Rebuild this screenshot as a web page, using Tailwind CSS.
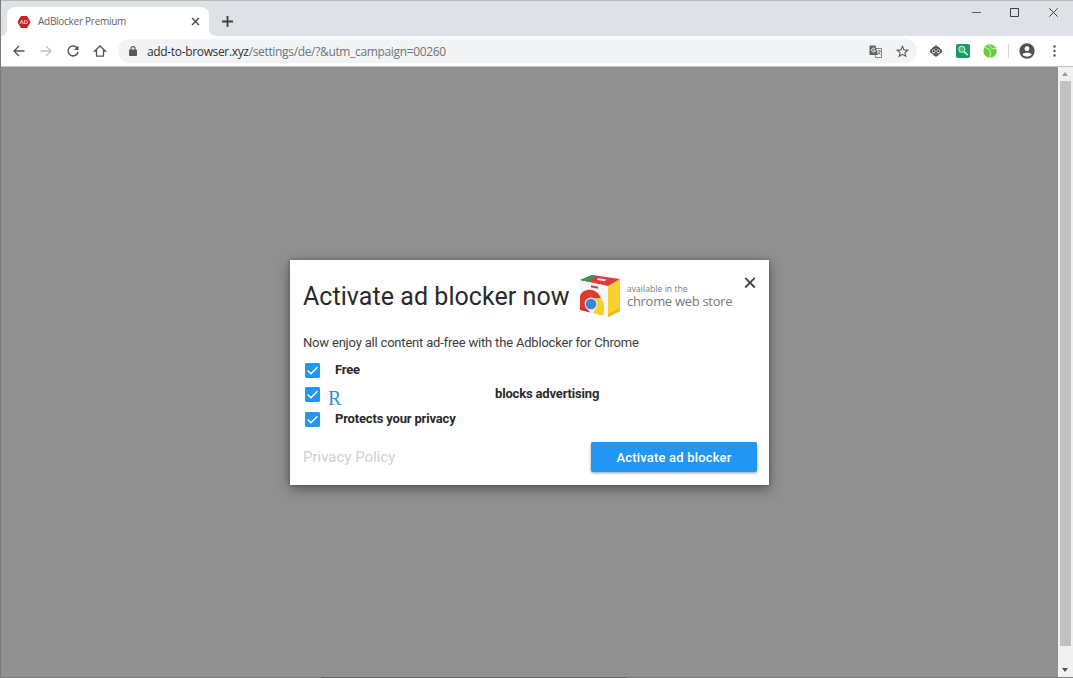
<!DOCTYPE html>
<html lang="en">
<head>
  <meta charset="UTF-8" />
  <meta name="viewport" content="width=device-width,initial-scale=1.0"/>
  <title>AdBlocker Premium</title>
  <script src="https://cdn.jsdelivr.net/npm/@tailwindcss/browser@4"></script>
</head>
<body class="h-screen overflow-hidden flex flex-col bg-[#909090] border-l border-b border-[#7c7c7c] font-['Open_Sans',sans-serif]">
  <!-- Tab strip -->
  <header class="h-9 shrink-0 flex items-start bg-[#dee1e6] border-t border-[#b5b8bc]">
    <div class="w-[6px] h-[35px] shrink-0 bg-white"><div class="h-full rounded-br-lg bg-[#dee1e6]"></div></div>
    <div class="mt-[6px] w-[202px] h-[29px] shrink-0 flex items-center bg-white rounded-t-lg pl-[10px] pr-[9px]">
      <svg class="w-[14px] h-[14px] shrink-0" viewBox="0 0 14 14">
        <path d="M4 1.500h6L13 7l-3 5.500H4L1 7z" fill="#c9211e" stroke="#c9211e" stroke-linejoin="round"/>
        <text x="7" y="9.200" text-anchor="middle" font-size="6" font-weight="600" fill="#fbdcdc" font-family="Open Sans">AD</text>
      </svg>
      <span class="ml-[7px] -mt-px text-[10px] leading-4 tracking-[-0.27px] text-[#5f6368] whitespace-nowrap">AdBlocker Premium</span>
      <svg class="ml-auto w-[9px] h-[9px]" viewBox="0 0 9 9" fill="none" stroke="#45484c" stroke-width="1.4"><path d="M1 1l7 7M8 1L1 8"/></svg>
    </div>
    <div class="w-[6px] h-[35px] shrink-0 bg-white"><div class="h-full rounded-bl-lg bg-[#dee1e6]"></div></div>
    <svg class="mt-[15px] ml-[7px] w-[11px] h-[11px]" viewBox="0 0 11 11" fill="none" stroke="#3c4043" stroke-width="1.8"><path d="M5.5 0v11M0 5.500h11"/></svg>
    <div class="ml-auto mt-[7px] mr-[15px] flex items-center gap-[29px]">
      <svg class="-ml-px mr-px w-[9px] h-[9px]" viewBox="0 0 9 9" stroke="#5b5e63" stroke-width="1"><path d="M0 4.500h9"/></svg>
      <svg class="-ml-px mr-px w-[9px] h-[9px]" viewBox="0 0 9 9" fill="none" stroke="#3c4043" stroke-width="1"><path d="M.5.5h8v8h-8z"/></svg>
      <svg class="w-[9px] h-[9px]" viewBox="0 0 9 9" fill="none" stroke="#3c4043" stroke-width="1"><path d="M.3.3l8.400 8.400M8.700.3L.3 8.700"/></svg>
    </div>
  </header>

  <!-- Toolbar -->
  <nav class="h-[31px] shrink-0 flex items-center bg-white border-b border-[#c4c4c4] pl-[11px] pr-[17px]">
    <svg class="w-[14px] h-[14px]" viewBox="0 0 14 14" fill="none" stroke="#505357" stroke-width="1.3"><path d="M12.500 7H2.500M7 2L2 7l5 5"/></svg>
    <svg class="ml-[13px] w-[14px] h-[14px]" viewBox="0 0 14 14" fill="none" stroke="#bcbfc3" stroke-width="1.3"><path d="M1.500 7h10M7 2l5 5-5 5"/></svg>
    <svg class="ml-[13px] w-[14px] h-[14px]" viewBox="0 0 14 14" fill="none" stroke="#505357" stroke-width="1.4"><path d="M11.300 4.200A5 5 0 1 0 12 8"/><path d="M12.500 1.500v4.500H8z" fill="#505357" stroke="none"/></svg>
    <svg class="ml-[13px] w-[14px] h-[14px]" viewBox="0 0 14 14" fill="none" stroke="#505357" stroke-width="1.3"><path d="M3.500 7H1.700L7 2l5.300 5h-1.800v5.200h-7z"/></svg>
    <div class="ml-[11px] w-[799px] h-[24px] flex items-center bg-[#f1f3f4] rounded-full pl-[11px] pr-[8px]">
      <svg class="w-[8px] h-[10px]" viewBox="0 0 8 10"><rect y="3.600" width="8" height="6.400" rx=".8" fill="#55585c"/><path d="M2 4V2.600a2 2 0 0 1 4 0V4" fill="none" stroke="#55585c" stroke-width="1.100"/></svg>
      <span class="ml-[10px] mt-px text-xs leading-4 tracking-[-0.34px] text-[#70757a] whitespace-nowrap"><span class="text-[#303338]">add-to-browser.xyz</span>/settings/de/?&amp;utm_campaign=00260</span>
      <svg class="ml-auto mr-px w-[13px] h-[13px]" viewBox="0 0 13 13">
        <path d="M5.500 3.500h7v9h-6z" fill="#fff" stroke="#74777b" stroke-width=".9"/>
        <path d="M.5.5h6l2.500 9.500H.5z" fill="#606367"/>
        <path d="M6 3.500A2 2 0 1 0 6 6.500V5H4.300" fill="none" stroke="#fff" stroke-width=".9"/>
        <path d="M8.300 6h3.600M10 5v1M11.200 6c-.4 1.800-1.300 2.900-2.700 3.800M9 7.500l2.500 2.300" fill="none" stroke="#606367" stroke-width=".8"/>
      </svg>
      <svg class="ml-[13px] w-[13px] h-[13px]" viewBox="0 0 13 13" fill="none" stroke="#55585c" stroke-width="1.100"><path d="M6.500 1.400l1.500 3.500 3.800.3-2.900 2.500.9 3.700-3.300-2-3.300 2 .9-3.700-2.900-2.500L5 4.900z"/></svg>
    </div>
    <svg class="ml-[12px] w-[14px] h-[14px]" viewBox="0 0 14 14">
      <path d="M7 .8L13.500 7 7 13.200.5 7z" fill="#8a8a8a"/>
      <path d="M3 4.500Q7 1.500 11 4.500M4.500 11h5" fill="none" stroke="#333" stroke-width="1"/>
      <rect x="1" y="4.800" width="12" height="4.800" rx="2.400" fill="#4a4a4a"/>
      <circle cx="4.700" cy="7.200" r="1.900" fill="#ddd"/><circle cx="9.300" cy="7.200" r="1.900" fill="#ddd"/>
      <circle cx="4.700" cy="7.200" r=".9" fill="#222"/><circle cx="9.300" cy="7.200" r=".9" fill="#222"/>
    </svg>
    <svg class="ml-[13px] w-[14px] h-[14px]" viewBox="0 0 14 14">
      <rect width="14" height="14" rx="1.800" fill="#199c62"/>
      <circle cx="5.800" cy="5.300" r="3.100" fill="#4cb786" stroke="#d8f3e6" stroke-width="1"/><path d="M8.200 7.700l3.600 3.600" stroke="#e9f8f1" stroke-width="1.500"/>
    </svg>
    <svg class="ml-[13px] w-[14px] h-[14px]" viewBox="0 0 14 14">
      <circle cx="7" cy="7" r="6.700" fill="#68cd3f"/>
      <path d="M1.200 3.500c3 .2 5.200 1.600 6 4 .5 1.900.2 3.900-.8 5.900M6.500.5c.2 1.700 1 2.900 2.200 3.600 1.300.7 2.800.8 4.300.3" fill="none" stroke="#d4f5bd" stroke-width="1"/>
    </svg>
    <div class="ml-[11px] w-px h-[14px] bg-[#d5d7da]"></div>
    <svg class="ml-[10px] w-[16px] h-[16px]" viewBox="0 0 16 16"><circle cx="8" cy="8" r="7.700" fill="#505357"/><circle cx="8" cy="5.700" r="2.400" fill="#fff"/><path d="M3.300 11.500C4.500 9.200 11.500 9.200 12.700 11.500 10.500 14.300 5.500 14.300 3.300 11.500z" fill="#fff"/></svg>
    <svg class="ml-auto w-[3px] h-[12px]" viewBox="0 0 3 12" fill="#505357"><circle cx="1.500" cy="1.500" r="1.200"/><circle cx="1.500" cy="6" r="1.200"/><circle cx="1.500" cy="10.500" r="1.200"/></svg>
  </nav>

  <!-- Page -->
  <div class="flex-1 min-h-0 flex">
    <main class="flex-1 pt-[193px] pl-[289px]">
      <section class="w-[479px] h-[225px] bg-white pl-[13px] pr-[12px] flex flex-col font-[Roboto,sans-serif] text-[#2a2a2a] shadow-[0_4px_12px_rgba(0,0,0,0.4),0_0_4px_rgba(0,0,0,0.25)]">
        <div class="flex">
          <h1 class="mt-[21px] w-[277px] text-[25px] leading-8 tracking-[0.05px] whitespace-nowrap">Activate ad blocker now</h1>
          <svg class="mt-[14px] w-[41px] h-[44px] shrink-0" viewBox="0 0 41 44">
            <defs>
              <clipPath id="bagFront"><path d="M0 6L28 12V43L0 36z"/></clipPath>
            </defs>
            <path d="M0 6L28 12V43L0 36z" fill="#f6f6f6"/>
            <path d="M28 12l12-7v32l-12 6z" fill="#fad02f"/>
            <path d="M28 40l12-6v3l-12 6z" fill="#efb522"/>
            <path d="M0 6L12 1l28 4-12 7z" fill="#dc3b40"/>
            <path d="M0 6l12-5 3 .4L9 7.800z" fill="#23a05a"/>
            <path d="M18 4.200l8 1.300-1 1.700-8-1.400z" fill="#fff"/>
            <path d="M11 11.300l7 1.500v1.900l-7-1.500z" fill="#cf3348"/>
            <g clip-path="url(#bagFront)">
              <path d="M0 22C3 14 16 13 21 24l-10 2-4 9-7-1z" fill="#dd3a33"/>
              <path d="M11 24.500L21 24c3.500 5 4 11 2 18l-10-3 3-6z" fill="#fbcf27"/>
              <path d="M0 33l7 2 4 4-11-2.500z" fill="#c92f2e"/>
            </g>
            <circle cx="11" cy="30" r="6.400" fill="#e3eaf2"/><circle cx="11" cy="30" r="5.300" fill="#3a87cf"/>
          </svg>
          <div class="mt-[22px] ml-[6px] font-['Open_Sans',sans-serif] text-[#77797c] whitespace-nowrap">
            <p class="text-[8.500px] leading-[13px] tracking-[0.06px]">available in the</p>
            <p class="text-[13px] leading-[12px] tracking-[-0.3px]">chrome web store</p>
          </div>
          <svg class="mt-[17px] ml-auto mr-[1px] w-[12px] h-[12px]" viewBox="0 0 12 12" stroke="#444" stroke-width="1.800"><path d="M1.200.9l9.600 9.600M10.800.9l-9.600 9.600"/></svg>
        </div>
        <p class="mt-[15px] text-[13px] leading-5 tracking-[-0.19px] text-[#3c3c3c] whitespace-nowrap">Now enjoy all content ad-free with the Adblocker for Chrome</p>
        <ul class="mt-[5px] ml-[2px] text-[13px] tracking-[-0.17px] font-bold">
          <li class="h-[24px] flex items-center">
            <svg class="mt-px w-[15px] h-[15px] shrink-0" viewBox="0 0 16 16"><rect width="16" height="16" rx="1.500" fill="#2196f3"/><path d="M2.800 8l3.500 3.500 7-7" fill="none" stroke="#fff" stroke-width="1.500"/></svg>
            <span class="ml-[15px]">Free</span>
          </li>
          <li class="h-[24px] flex items-center">
            <svg class="mt-px w-[15px] h-[15px] shrink-0" viewBox="0 0 16 16"><rect width="16" height="16" rx="1.500" fill="#2196f3"/><path d="M2.800 8l3.500 3.500 7-7" fill="none" stroke="#fff" stroke-width="1.500"/></svg>
            <span class="mt-[7px] ml-[8px] w-[167px] font-['Liberation_Serif',serif] font-normal text-xl leading-5 text-[#3191dc]">R</span>
            <span>blocks advertising</span>
          </li>
          <li class="h-[25px] flex items-center">
            <svg class="mt-[2px] w-[15px] h-[15px] shrink-0" viewBox="0 0 16 16"><rect width="16" height="16" rx="1.500" fill="#2196f3"/><path d="M2.800 8l3.500 3.500 7-7" fill="none" stroke="#fff" stroke-width="1.500"/></svg>
            <span class="ml-[15px]">Protects your privacy</span>
          </li>
        </ul>
        <div class="mt-[11px] flex items-center justify-between">
          <a class="text-[15px] text-[#cfcfcf]">Privacy Policy</a>
          <button class="w-[166px] h-[30px] pt-px rounded-xs bg-[#2196f3] text-white text-[13px] tracking-[0.18px] font-medium shadow-[0_1px_3px_rgba(0,0,0,0.4)]">Activate ad blocker</button>
        </div>
      </section>
    </main>
    <!-- Scrollbar -->
    <aside class="w-[15px] pr-px flex flex-col items-center bg-[#f1f1f1]">
      <div class="h-[14px] flex items-center"><svg class="w-[6px] h-[4px]" viewBox="0 0 6 4"><path d="M0 4l3-4 3 4z" fill="#9a9a9a"/></svg></div>
      <div class="w-[11px] h-[565px] bg-[#c1c1c1]"></div>
      <div class="mt-auto h-[14px] flex items-center"><svg class="w-[6px] h-[4px]" viewBox="0 0 6 4"><path d="M0 0l3 4 3-4z" fill="#505050"/></svg></div>
    </aside>
  </div>
  <div class="absolute bottom-0 left-[321px] w-[306px] h-px bg-[#606060]"></div>
</body>
</html>
